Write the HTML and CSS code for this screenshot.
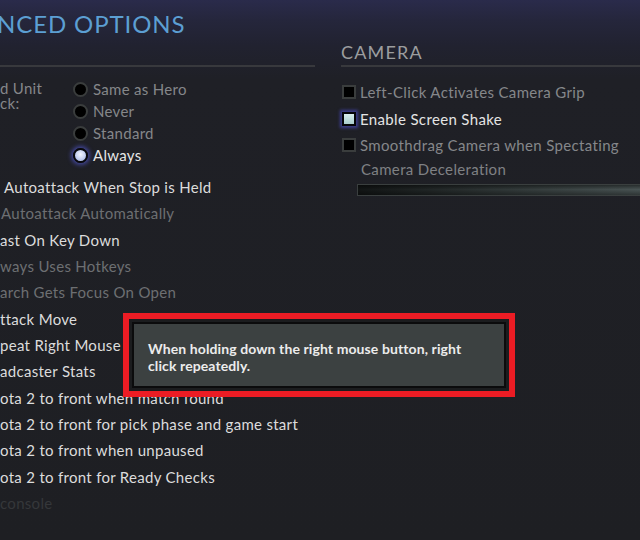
FILE: index.html
```html
<!DOCTYPE html>
<html>
<head>
<meta charset="utf-8">
<link rel="stylesheet" href="styles.css">
</head>
<body>
<div class="page">
  <section class="col left">
    <div class="head"><h1 class="title">NCED OPTIONS</h1></div>
    <div class="rule"></div>
    <div class="radio-group">
      <div class="radio-label"><div>d Unit</div><div>ck:</div></div>
      <ul class="radios">
        <li class="radio"><span class="dot"></span>Same as Hero</li>
        <li class="radio"><span class="dot"></span>Never</li>
        <li class="radio"><span class="dot"></span>Standard</li>
        <li class="radio on"><span class="dot"></span>Always</li>
      </ul>
    </div>
    <ul class="opts">
      <li class="opt on shift4">Autoattack When Stop is Held</li>
      <li class="opt shift1">Autoattack Automatically</li>
      <li class="opt on">ast On Key Down</li>
      <li class="opt">ways Uses Hotkeys</li>
      <li class="opt">arch Gets Focus On Open</li>
      <li class="opt on">ttack Move</li>
      <li class="opt on">peat Right Mouse</li>
      <li class="opt on">adcaster Stats</li>
      <li class="opt on">ota 2 to front when match found</li>
      <li class="opt on">ota 2 to front for pick phase and game start</li>
      <li class="opt on">ota 2 to front when unpaused</li>
      <li class="opt on">ota 2 to front for Ready Checks</li>
      <li class="opt off">console</li>
    </ul>
  </section>
  <section class="col right">
    <div class="head"><h2 class="cam">CAMERA</h2></div>
    <div class="rule"></div>
    <ul class="checks">
      <li class="check"><span class="box"></span>Left-Click Activates Camera Grip</li>
      <li class="check on"><span class="box"></span>Enable Screen Shake</li>
      <li class="check"><span class="box"></span>Smoothdrag Camera when Spectating</li>
    </ul>
    <div class="slider-label">Camera Deceleration</div>
    <div class="slider"></div>
  </section>
  <div class="tip-mark">
    <div class="tip">When holding down the right mouse button, right click repeatedly.</div>
  </div>
</div>
</body>
</html>
```
FILE: styles.css
```css
* { box-sizing: border-box; }
html, body {
  margin: 0;
  padding: 0;
  width: 640px;
  height: 540px;
  overflow: hidden;
}
body {
  background: linear-gradient(180deg, #2a2b4b 0px, #25263c 20px, #212230 45px, #1f2026 80px, #1e1f23 100%);
  font-family: Lato, "Open Sans", sans-serif;
  color: #d9d9d9;
}
ul { list-style: none; margin: 0; padding: 0; }
h1, h2 { margin: 0; font-weight: normal; }

.page {
  position: relative;
  display: flex;
  gap: 26px;
  width: 640px;
  height: 540px;
}
.col { display: flex; flex-direction: column; }
.left { width: 315px; flex: none; }
.right { flex: 1; min-width: 0; }

.head { height: 65px; }
.left .head { padding-top: 9px; }
.right .head { padding-top: 41px; }

.title {
  font-size: 24px;
  line-height: 30px;
  letter-spacing: 0.9px;
  color: #5c9fd3;
  margin-left: -3px;
  white-space: nowrap;
}
.cam {
  font-size: 18px;
  line-height: 22px;
  letter-spacing: 1.2px;
  color: #9c9d9f;
}
.rule {
  height: 2px;
  background: #38393d;
}

.radio-group {
  display: flex;
  margin-top: 11px;
  font-size: 15px;
  letter-spacing: 0.3px;
}
.radio-label {
  width: 73px;
  flex: none;
  color: #85878a;
  line-height: 15px;
  padding-top: 3px;
}
.radio {
  display: flex;
  align-items: center;
  gap: 5px;
  height: 22px;
  color: #85878a;
}
.radio.on { color: #e6e6e6; }
.dot {
  width: 15px;
  height: 15px;
  border-radius: 50%;
  background: #000;
  border: 2px solid #3a3d3d;
  flex: none;
}
.radio.on .dot {
  background: radial-gradient(circle at 50% 40%, #f4f6ff 0%, #c4cff0 55%, #98a6d8 100%);
  border-color: #08080c;
  box-shadow: 0 0 4px 2px rgba(84, 90, 220, 0.65);
}

.opts {
  margin-top: 8px;
  font-size: 15px;
  letter-spacing: 0.3px;
}
.opt {
  height: 26.33px;
  line-height: 26.33px;
  color: #6d6f72;
  white-space: nowrap;
}
.opt.on { color: #dcdcdc; }
.opt.off { color: #35373a; }
.shift4 { padding-left: 4px; }
.shift1 { padding-left: 1px; }

.checks {
  margin-top: 12px;
  font-size: 15px;
  letter-spacing: 0.35px;
}
.check {
  display: flex;
  align-items: center;
  gap: 4px;
  height: 26.5px;
  color: #85878a;
  white-space: nowrap;
}
.check.on { color: #e4e4e4; }
.box {
  width: 14px;
  height: 14px;
  margin-left: 1px;
  background: #000;
  border: 2px solid #3a3d3d;
  flex: none;
}
.check.on .box {
  background: linear-gradient(180deg, #d8eeee, #a9cccc);
  border-color: #050508;
  box-shadow: 0 0 3px 2px rgba(80, 82, 210, 0.6);
}
.slider-label {
  font-size: 15px;
  letter-spacing: 0.35px;
  line-height: 20px;
  color: #7f8184;
  margin-left: 20px;
}
.slider {
  margin-top: 5px;
  margin-left: 16px;
  width: 300px;
  height: 12px;
  border: 1px solid #3a3f3f;
  background:
    linear-gradient(180deg, rgba(0,0,0,0.45) 0%, rgba(0,0,0,0) 45%, rgba(0,0,0,0.35) 100%),
    linear-gradient(90deg, #121515 0%, #2d3434 45%, #4b5656 100%);
}

.tip-mark {
  position: absolute;
  left: 123px;
  top: 313px;
  width: 392px;
  height: 84px;
  border: 6px solid #ec1c24;
  background: #1b1c1e;
  padding: 3px;
}
.tip {
  height: 100%;
  border: 2px solid #0b0b0c;
  background: #3c4141;
  padding: 16px 14px 0;
  font-size: 14px;
  font-weight: bold;
  line-height: 17px;
  letter-spacing: 0.1px;
  color: #ececec;
}
```
